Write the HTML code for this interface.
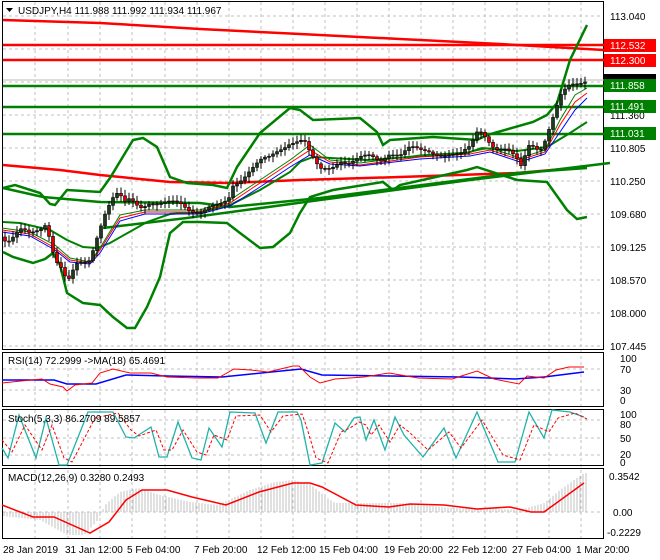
<!DOCTYPE html>
<html><head><meta charset="utf-8"><style>
body{margin:0;background:#fff;}
svg{display:block;font-family:"Liberation Sans",sans-serif;}
</style></head><body>
<svg id="s" width="660" height="560" viewBox="0 0 660 560" xmlns="http://www.w3.org/2000/svg">
<rect width="660" height="560" fill="#fff"/>
<g stroke="#c0c0c0" stroke-dasharray="3,3" stroke-width="1">
<path d="M35 2V538M68 2V538M100 2V538M132 2V538M165 2V538M197 2V538M229 2V538M261 2V538M293 2V538M325 2V538M357 2V538M389 2V538M421 2V538M453 2V538M485 2V538M517 2V538M549 2V538M581 2V538"/>
<path d="M3 16H603M3 49H603M3 82H603M3 115H603M3 148H603M3 181H603M3 214H603M3 247H603M3 280H603M3 313H603M3 346H603"/>
<path d="M3 369H603M3 390H603M3 420H603M3 438H603M3 455H603M3 512H603"/>
</g>
<g fill="none" stroke="#000">
<rect x="2.5" y="1.5" width="601" height="348"/>
<rect x="2.5" y="352.5" width="601" height="54"/>
<rect x="2.5" y="409.5" width="601" height="56"/>
<rect x="2.5" y="468.5" width="601" height="70"/>
</g>
<g stroke="#f00" stroke-width="2.5" fill="none">
<path d="M3 20L100 23L200 29L300 34L400 39L500 44L604 50"/>
<path d="M3 45H604M3 60H604"/>
<path d="M3 165L60 170L100 175L170 182L230 183L300 180L400 177L517 173L587 167"/>
</g>
<line x1="3" y1="80" x2="604" y2="80" stroke="#bbb"/>
<g stroke="#008000" stroke-width="2.5" fill="none">
<path d="M3 86H604M3 107H604M3 134H604"/>
<path d="M103 228L187 218L320 200L470 180L610 163"/>
<path d="M3 188L43 197L100 202L200 203L230 207L320 198L517 173L587 168"/>
<path d="M3 188L15 185L40 193L50 204L55 205L67 190L100 192L110 178L133 140L143 138L157 147L170 177L187 183L213 185L227 188L237 167L260 133L290 108L300 110L313 120L360 118L377 132L383 145L390 140L433 137L477 140L487 135L533 122L547 115L557 103L570 60L587 25"/>
<path d="M3 252L13 257L33 263L45 259L53 253L60 265L67 293L83 303L100 305L113 317L127 328L135 328L147 307L160 277L170 233L183 222L200 222L227 223L240 233L260 248L273 247L290 233L300 213L310 197L333 190L383 182L393 190L400 185L467 170L477 167L517 180L547 182L567 210L577 219L587 217"/>
<path d="M3 222L20 223L50 230L67 240L83 247L97 248L110 243L147 222L170 214L200 212L230 205L260 190L290 172L300 162L313 157L367 160L467 153L482 148L517 151L547 147L570 133L587 122" stroke-width="2"/>
</g>
<path d="M2 228L30 232L55 245L70 258L90 262L100 248L120 215L145 210L200 210L230 200L260 180L290 160L310 145L330 160L360 163L420 155L470 152L490 148L520 158L545 150L560 120L575 95L587 88" stroke="#008000" fill="none"/>
<path d="M2 230L30 234L55 248L70 260L90 263L100 250L120 218L145 212L200 212L230 203L260 183L290 163L310 150L330 162L360 165L420 157L470 154L490 150L520 160L545 152L560 125L575 102L587 93" stroke="#f00" fill="none"/>
<path d="M2 232L30 236L55 250L70 262L90 264L100 253L120 221L145 214L200 214L230 206L260 187L290 167L310 155L330 164L360 166L420 159L470 156L490 152L520 162L545 154L560 132L575 110L587 98" stroke="#00f" fill="none"/>
<g id="c"></g>
<g font-size="10" fill="#000">
<text x="610" y="20">113.040</text>
<text x="610" y="119">111.360</text>
<text x="610" y="152">110.805</text>
<text x="610" y="185">110.250</text>
<text x="610" y="218">109.680</text>
<text x="610" y="251">109.125</text>
<text x="610" y="284">108.570</text>
<text x="610" y="317">108.000</text>
<text x="610" y="350">107.445</text>
</g>
<rect x="604" y="39" width="52" height="13" fill="#f00"/><text x="610" y="49" font-size="10" fill="#fff">112.532</text>
<rect x="604" y="54" width="52" height="13" fill="#f00"/><text x="610" y="64" font-size="10" fill="#fff">112.300</text>
<rect x="604" y="74" width="52" height="10" fill="#000"/>
<rect x="604" y="79" width="52" height="13" fill="#008000"/><text x="610" y="89" font-size="10" fill="#fff">111.858</text>
<rect x="604" y="100" width="52" height="13" fill="#008000"/><text x="610" y="110" font-size="10" fill="#fff">111.491</text>
<rect x="604" y="127" width="52" height="13" fill="#008000"/><text x="610" y="137" font-size="10" fill="#fff">111.031</text>
<text x="18" y="14" font-size="10">USDJPY,H4  111.988 111.992 111.934 111.967</text>
<path d="M6 8h7l-3.5 4z" fill="#000"/>
<!-- RSI -->
<path d="M2 380L54 380L67 384L96 384L126 375L167 376L222 377L301 369L322 375L460 377L515 379L544 377L584 372" stroke="#00f" stroke-width="1.5" fill="none"/>
<path d="M2 383L21 381L42 379L50 384L63 387L67 391L75 385L92 383L100 373L113 369L130 373L151 373L167 377L197 378L218 378L234 369L251 370L268 372L293 366L299 366L310 377L320 383L335 379L364 377L389 373L418 378L452 379L477 371L494 379L519 384L527 376L544 378L556 370L569 367L584 367" stroke="#f00" fill="none"/>
<g font-size="10"><text x="8" y="364">RSI(14) 72.2999  -&gt;MA(18) 65.4691</text>
<text x="620" y="362">100</text><text x="620" y="373">70</text><text x="620" y="394">30</text><text x="620" y="404">0</text></g>
<!-- Stoch -->
<path d="M2 448L8 458L19 415L36 458L46 418L59 465L67 465L88 412L113 412L126 437L134 438L151 427L159 457L167 457L178 422L192 458L201 460L209 428L222 447L230 412L255 413L266 443L278 412L297 412L301 420L310 465L322 463L335 423L345 432L354 418L360 417L366 440L374 420L385 450L395 417L404 435L423 457L444 428L456 458L477 412L498 462L515 462L529 412L544 438L552 410L570 412L584 417" stroke="#20b2aa" stroke-width="1.3" fill="none"/>
<path d="M2 440L12 452L25 425L42 450L52 425L64 458L72 462L95 418L118 413L131 430L139 436L156 430L164 450L172 450L183 430L197 452L206 455L214 435L227 440L236 416L260 415L271 432L283 416L302 414L306 425L316 458L328 463L341 432L350 428L359 422L366 425L371 435L379 425L390 442L400 425L409 432L428 450L449 432L461 448L482 420L503 455L520 460L534 425L549 432L558 418L575 413L587 419" stroke="#f00" stroke-dasharray="3,2" fill="none"/>
<g font-size="10"><text x="8" y="422">Stoch(5,3,3) 86.2709 89.5857</text>
<text x="620" y="418">100</text><text x="620" y="428">80</text><text x="620" y="442">50</text><text x="620" y="458">20</text><text x="620" y="466">0</text></g>
<!-- MACD -->
<g id="h" stroke="#c0c0c0" stroke-width="1"></g>
<path d="M2 505L33 517L54 517L90 533L109 522L126 500L142 490L167 490L192 497L226 505L259 492L293 483L310 483L322 487L356 505L389 507L410 504L444 505L477 509L510 507L531 512L544 512L584 483" stroke="#f00" stroke-width="1.5" fill="none"/>
<g font-size="10"><text x="8" y="481">MACD(12,26,9) 0.3280 0.2493</text>
<text x="609" y="480">0.3542</text><text x="613" y="516">0.00</text><text x="607" y="536">-0.2229</text></g>
<g font-size="10">
<text x="3" y="553">28 Jan 2019</text><text x="65" y="553">31 Jan 12:00</text><text x="127" y="553">5 Feb 04:00</text>
<text x="194" y="553">7 Feb 20:00</text><text x="257" y="553">12 Feb 12:00</text><text x="319" y="553">15 Feb 04:00</text>
<text x="384" y="553">19 Feb 20:00</text><text x="448" y="553">22 Feb 12:00</text><text x="512" y="553">27 Feb 04:00</text>
<text x="576" y="553">1 Mar 20:00</text>
</g>
</svg>
<script>
(function(){
var NS="http://www.w3.org/2000/svg";
function interp(P,x){for(var i=1;i<P.length;i++){if(x<=P[i][0]){var a=P[i-1],b=P[i];return a[1]+(b[1]-a[1])*(x-a[0])/(b[0]-a[0]);}}return P[P.length-1][1];}
var P=[[3,237],[10,240],[20,232],[30,236],[40,228],[45,222],[50,235],[55,258],[60,265],[65,278],[70,283],[75,268],[80,265],[85,262],[90,258],[95,240],[100,225],[105,212],[112,200],[118,196],[125,205],[130,200],[140,205],[150,200],[160,205],[170,205],[180,204],[190,208],[200,210],[210,208],[220,208],[228,202],[233,185],[240,178],[250,168],[260,162],[270,160],[280,150],[290,140],[300,138],[305,142],[308,150],[315,165],[320,172],[330,168],[340,158],[350,162],[360,160],[370,158],[380,160],[390,150],[400,155],[410,150],[420,152],[430,150],[440,152],[450,155],[460,158],[470,148],[478,128],[483,130],[490,140],[495,148],[500,150],[505,152],[510,155],[518,162],[522,168],[526,150],[530,140],[540,148],[545,140],[550,128],[555,115],[560,100],[565,92],[570,85],[575,82],[580,80],[585,78]];
var g=document.getElementById("c"),prev=interp(P,3);
for(var x=5;x<=587;x+=4){
 var c=interp(P,x)+Math.sin(x*1.7)*4,o=prev;prev=c;
 var top=Math.min(o,c),bot=Math.max(o,c);if(bot-top<1)bot=top+1;
 var hi=top-2-Math.abs(Math.sin(x*2.3))*4,lo=bot+2+Math.abs(Math.cos(x*1.3))*4;
 var l=document.createElementNS(NS,"line");l.setAttribute("x1",x);l.setAttribute("x2",x);l.setAttribute("y1",hi);l.setAttribute("y2",lo);l.setAttribute("stroke","#000");g.appendChild(l);
 var r=document.createElementNS(NS,"rect");r.setAttribute("x",x-1.5);r.setAttribute("y",top);r.setAttribute("width",3);r.setAttribute("height",bot-top);r.setAttribute("fill",c<o?"#1e3a1e":"#e00000");r.setAttribute("stroke","#000");r.setAttribute("stroke-width","0.6");g.appendChild(r);
}
var H=[[3,516],[40,520],[67,535],[84,535],[98,520],[105,505],[120,492],[138,488],[160,495],[190,502],[218,505],[250,490],[275,482],[293,480],[310,484],[326,497],[335,503],[400,503],[450,508],[500,509],[520,510],[544,503],[560,490],[584,473]];
var h=document.getElementById("h");
for(var x=4;x<=587;x+=3){var y=interp(H,x);var l=document.createElementNS(NS,"line");l.setAttribute("x1",x);l.setAttribute("x2",x);l.setAttribute("y1",512);l.setAttribute("y2",y);h.appendChild(l);}
})();
</script>
</body></html>
